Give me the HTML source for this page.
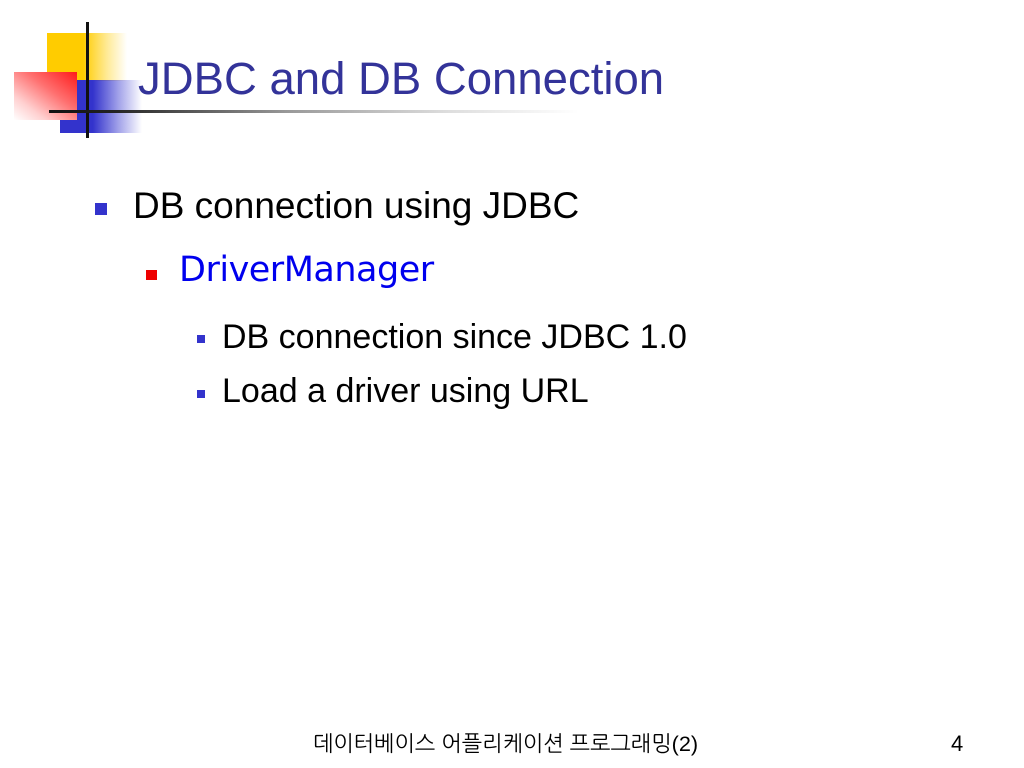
<!DOCTYPE html>
<html><head><meta charset="utf-8"><style>
html,body{margin:0;padding:0;background:#fff;}
body{width:1024px;height:768px;position:relative;overflow:hidden;font-family:"Liberation Sans",Arial,sans-serif;}
.a{position:absolute;}
.t{position:absolute;white-space:nowrap;line-height:1;}
</style></head><body>
<div class="a" style="left:47px;top:33px;width:80px;height:48px;background:linear-gradient(to right,#ffcc00 0%,#ffcc00 45%,rgba(255,220,80,0.6) 75%,rgba(255,255,255,0) 100%);"></div>
<div class="a" style="left:60px;top:80px;width:82px;height:53px;background:linear-gradient(to right,#3333cc 0%,#3333cc 40%,rgba(60,60,210,0.5) 70%,rgba(255,255,255,0) 100%);"></div>
<div class="a" style="left:14px;top:72px;width:63px;height:48px;background:linear-gradient(to bottom left,#ff1a1a 0%,#ff7070 40%,#ffd0d0 75%,#fff 100%);"></div>
<div class="a" style="left:86px;top:22px;width:3px;height:116px;background:#111;"></div>
<div class="a" style="left:49px;top:110px;width:530px;height:3px;background:linear-gradient(to right,#111 0%,#222 12%,#999 45%,#ddd 75%,rgba(255,255,255,0) 100%);"></div>
<div class="t" style="left:138px;top:56px;font-size:45.5px;color:#333399;">JDBC and DB Connection</div>

<div class="a" style="left:95px;top:203px;width:12px;height:12px;background:#3333cc;"></div>
<div class="t" style="left:133px;top:187px;font-size:37px;color:#000;">DB connection using JDBC</div>

<div class="a" style="left:146px;top:270px;width:11px;height:10px;background:#ee0000;"></div>
<div class="t" style="left:179px;top:253px;font-size:35px;color:#0000ee;font-family:'DejaVu Sans',sans-serif;letter-spacing:-0.5px;">DriverManager</div>

<div class="a" style="left:197px;top:335px;width:8px;height:8px;background:#3333cc;"></div>
<div class="t" style="left:222px;top:320px;font-size:34px;color:#000;">DB connection since JDBC 1.0</div>
<div class="a" style="left:197px;top:390px;width:8px;height:8px;background:#3333cc;"></div>
<div class="t" style="left:222px;top:374px;font-size:34px;color:#000;">Load a driver using URL</div>

<div class="t" style="left:313px;top:733px;font-size:21.7px;color:#000;font-family:'Liberation Sans','NanumGothic','Noto Sans CJK KR',sans-serif;">데이터베이스 어플리케이션 프로그래밍(2)</div>
<div class="t" style="left:951px;top:733px;font-size:22px;color:#000;">4</div>
</body></html>
